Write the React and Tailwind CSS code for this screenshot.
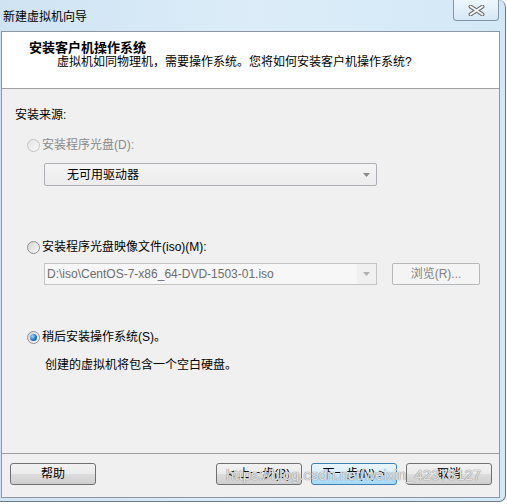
import React from 'react';

const font = { fontFamily: '"Liberation Sans", "Noto Sans CJK SC", sans-serif' };

function Radio({ state }) {
  if (state === 'checked') {
    return (
      <span className="w-[13px] h-[13px] rounded-full border border-[#8e8f8f] bg-gradient-to-br from-[#d6d6d6] to-[#fbfbfb] flex items-center justify-center shrink-0">
        <span className="w-[7px] h-[7px] rounded-full bg-[radial-gradient(circle_at_35%_35%,#a8dcff,#1c72c8_55%,#0b3c78)]" />
      </span>
    );
  }
  if (state === 'disabled') {
    return <span className="w-[13px] h-[13px] rounded-full border border-[#c4c4c4] bg-gradient-to-br from-[#e4e4e4] to-[#f8f8f8] shrink-0" />;
  }
  return <span className="w-[13px] h-[13px] rounded-full border border-[#8e8f8f] bg-gradient-to-br from-[#d4d4d4] to-[#fafafa] shrink-0" />;
}

function Arrow({ color }) {
  return (
    <svg width="7" height="4" viewBox="0 0 7 4">
      <path d="M0 0H7L3.5 4Z" fill={color} />
    </svg>
  );
}

function Button({ children, primary, className = '' }) {
  return (
    <div
      className={`w-[86px] h-[22px] rounded-[3px] border flex items-center justify-center text-[12px] text-black ${
        primary
          ? 'border-[#3c7fb1] bg-[linear-gradient(#eaf6fd_0%,#d9f0fc_50%,#bee6fd_50%,#a7d9f5_100%)]'
          : 'border-[#707070] bg-[linear-gradient(#f2f2f2_0%,#ebebeb_50%,#dddddd_50%,#cfcfcf_100%)]'
      } ${className}`}
    >
      {children}
    </div>
  );
}

export default function App() {
  return (
    <div className="w-[507px] h-[504px] bg-white overflow-hidden relative" style={font}>
      <div className="w-[506px] h-[502px] rounded-r-[7px] border-r border-b border-[#6d7986] bg-gradient-to-r from-[#cfe3f3] via-[#dcedf9] to-[#d3e8f6] flex flex-col pl-[1px] pr-[5px] pb-[3px]">
        {/* title bar */}
        <div className="h-[31px] flex items-start shrink-0">
          <div className="flex-1 pl-[2px] pt-[9px] text-[12px] leading-[16px] text-black">新建虚拟机向导</div>
          <div className="w-[46px] h-[21px] mr-[1px] rounded-b-[4px] border border-t-0 border-[#8595a8] bg-gradient-to-b from-[#eef6fc] to-[#d6e8f6] flex items-center justify-center">
            <svg width="17" height="11" viewBox="0 0 17 11">
              <path d="M2.5 1.5L14.5 9.5M14.5 1.5L2.5 9.5" stroke="#6e6e6e" strokeWidth="4" strokeLinecap="round" />
              <path d="M2.5 1.5L14.5 9.5M14.5 1.5L2.5 9.5" stroke="#f6f6f6" strokeWidth="2" strokeLinecap="round" />
            </svg>
          </div>
        </div>

        {/* content */}
        <div className="flex-1 border border-[#8c97a3] flex flex-col bg-[#f0f0f0]">
          <div className="h-[57px] bg-white border-b border-[#a0a0a0] pl-[27px] pt-[8px] shrink-0">
            <div className="text-[13px] leading-[15px] font-bold text-black">安装客户机操作系统</div>
            <div className="text-[12px] leading-[15px] text-black pl-[28px]">虚拟机如同物理机，需要操作系统。您将如何安装客户机操作系统?</div>
          </div>

          <div className="flex-1 flex flex-col pt-[18px] text-[12px] leading-[16px] text-black">
            <div className="pl-[13px]">安装来源:</div>

            <div className="pl-[25px] mt-[14px] flex items-center gap-[2px] text-[#8a8a8a]">
              <Radio state="disabled" />
              <span>安装程序光盘(D):</span>
            </div>
            <div className="ml-[42px] mt-[10px] w-[333px] h-[23px] rounded-[2px] border border-[#acb0b4] bg-gradient-to-b from-[#f4f4f4] to-[#ececec] flex items-center pl-[22px] pr-[6px]">
              <span className="flex-1">无可用驱动器</span>
              <Arrow color="#8a8a8a" />
            </div>

            <div className="pl-[25px] mt-[53px] flex items-center gap-[2px]">
              <Radio state="normal" />
              <span>安装程序光盘映像文件(iso)(M):</span>
            </div>
            <div className="ml-[42px] mt-[8px] flex items-center gap-[15px]">
              <div className="w-[333px] h-[22px] border border-[#c4c4c4] bg-[#f0f0f0] flex items-stretch">
                <div className="w-[312px] bg-[#f7f7f7] flex items-center pl-[2px] text-[#6d6d6d]">D:\iso\CentOS-7-x86_64-DVD-1503-01.iso</div>
                <div className="flex-1 flex items-center justify-center">
                  <Arrow color="#b0b0b0" />
                </div>
              </div>
              <div className="w-[88px] h-[22px] rounded-[2px] border border-[#b5b8bb] bg-[#f4f4f4] flex items-center justify-center text-[#838383]">浏览(R)...</div>
            </div>

            <div className="pl-[25px] mt-[44px] flex items-center gap-[2px]">
              <Radio state="checked" />
              <span>稍后安装操作系统(S)。</span>
            </div>
            <div className="pl-[43px] mt-[12px]">创建的虚拟机将包含一个空白硬盘。</div>
          </div>

          <div className="h-[44px] border-t border-[#a0a0a0] shrink-0 flex items-start pt-[9px] pl-[8px] pr-[7px]">
            <Button>帮助</Button>
            <div className="flex-1" />
            <Button>&lt; 上一步(B)</Button>
            <Button primary className="ml-[9px]">下一步(N) &gt;</Button>
            <Button className="ml-[9px]">取消</Button>
          </div>
        </div>
      </div>

      {/* watermark */}
      <div
        className="absolute left-[226px] top-[466px] text-[15px] leading-[18px] whitespace-nowrap text-[#ececec]/90 pointer-events-none"
        style={{ fontFamily: '"Liberation Sans", sans-serif', textShadow: '0 0 1px #8a8a8a, 0 0 1px #8a8a8a' }}
      >
        https://blog.csdn.net/weixin_42373127
      </div>
    </div>
  );
}
